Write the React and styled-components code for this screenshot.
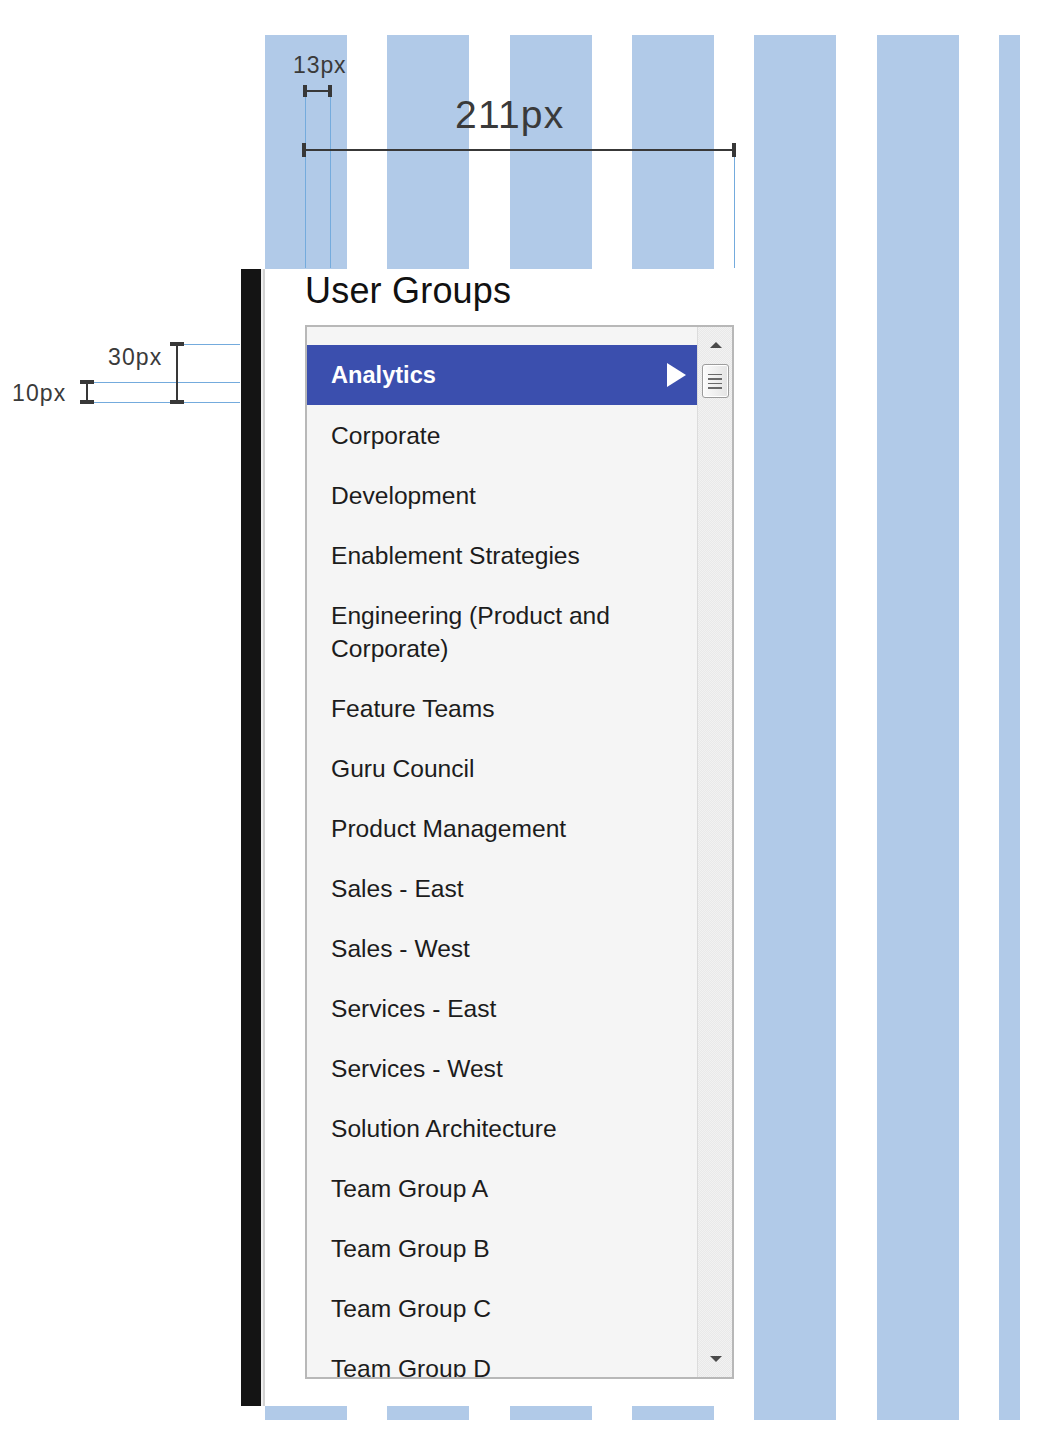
import React from 'react';
import styled, { createGlobalStyle } from 'styled-components';

const Global = createGlobalStyle`
  html, body { margin: 0; padding: 0; background: #ffffff; }
  body { font-family: "Liberation Sans", Arial, Helvetica, sans-serif; }
  * { box-sizing: border-box; }
`;

const Canvas = styled.div`
  position: relative;
  width: 1044px;
  height: 1446px;
  overflow: hidden;
  background: #ffffff;
`;

/* ---------- layout grid behind the panel ---------- */
const ColumnGrid = styled.div`
  position: absolute;
  left: 265px;
  top: 35px;
  width: 755px;
  height: 1385px;
  display: flex;
  gap: 40.33px;
  overflow: hidden;
`;

const GridColumn = styled.div`
  flex: 0 0 82px;
  height: 100%;
  background: #b1cae8;
`;

/* ---------- panel ---------- */
const Panel = styled.section`
  position: absolute;
  left: 241px;
  top: 269px;
  width: 500px;
  height: 1137px;
  display: flex;
`;

const PanelEdge = styled.div`
  flex: 0 0 20px;
  background: #141414;
`;

const PanelBody = styled.div`
  flex: 1;
  display: flex;
  flex-direction: column;
  background: #ffffff;
  border-left: 2px solid #efefef;
  box-shadow: inset 2px 0 0 #d2d2d2;
  padding: 4px 0 27px 42px;
`;

const Title = styled.h2`
  margin: 0 0 16px;
  font-family: "Liberation Sans", Arial, sans-serif;
  font-weight: 400;
  font-size: 36px;
  line-height: 36px;
  letter-spacing: 0.2px;
  color: #111111;
`;

const ListBox = styled.div`
  width: 429px;
  flex: 1;
  display: flex;
  border: 2px solid #b8b8b8;
  background: #f5f5f5;
  overflow: hidden;
`;

const Items = styled.ul`
  flex: 1;
  margin: 0;
  padding: 18px 0 0;
  list-style: none;
  overflow: hidden;
`;

const Item = styled.li`
  display: flex;
  align-items: center;
  justify-content: space-between;
  padding: 13.5px 11px 13.5px 24px;
  min-height: 60px;
  font-size: ${p => (p.$selected ? '23.6px' : '24.6px')};
  line-height: 33px;
  font-weight: ${p => (p.$selected ? 700 : 400)};
  color: ${p => (p.$selected ? '#ffffff' : '#1c1c1c')};
  background: ${p => (p.$selected ? '#3b4fae' : 'transparent')};
`;

const ItemLabel = styled.span`
  display: block;
  max-width: 330px;
`;

const PlayArrow = styled.span`
  flex: none;
  width: 0;
  height: 0;
  border-top: 12px solid transparent;
  border-bottom: 12px solid transparent;
  border-left: 19px solid #ffffff;
`;

const ScrollTrack = styled.div`
  flex: 0 0 35px;
  display: flex;
  flex-direction: column;
  align-items: center;
  border-left: 1px solid #dcdcdc;
  background-color: #eeeeee;
  background-image: repeating-conic-gradient(#f2f2f2 0 25%, #e9e9e9 0 50%);
  background-size: 2px 2px;
`;

const ArrowButton = styled.div`
  flex: 0 0 36px;
  width: 100%;
  display: flex;
  align-items: center;
  justify-content: center;
  padding-left: 2px;
  &::before {
    content: '';
    width: 0;
    height: 0;
    border-left: 6px solid transparent;
    border-right: 6px solid transparent;
    ${p => (p.$dir === 'up' ? 'border-bottom' : 'border-top')}: 6px solid #4a4a4a;
  }
`;

const Thumb = styled.div`
  flex: 0 0 34px;
  width: 27px;
  margin-top: 1px;
  border: 1px solid #9c9c9c;
  border-radius: 3px;
  background: linear-gradient(to right, #fbfbfb, #e4e4e4);
  display: flex;
  flex-direction: column;
  align-items: center;
  justify-content: center;
  gap: 3px;
  box-shadow: inset 0 0 0 1px #ffffff;
`;

const Grip = styled.span`
  width: 14px;
  height: 1.5px;
  background: #6a6a6a;
`;

const Spacer = styled.div`
  flex: 1;
`;

/* ---------- redline annotations ---------- */
const GuideV = styled.div`
  position: absolute;
  left: ${p => p.$x}px;
  top: ${p => p.$y}px;
  width: 1.5px;
  height: ${p => p.$len}px;
  background: #74abdd;
`;

const GuideH = styled.div`
  position: absolute;
  left: ${p => p.$x}px;
  top: ${p => p.$y}px;
  width: ${p => p.$len}px;
  height: 1.5px;
  background: #74abdd;
`;

const DimH = styled.div`
  position: absolute;
  left: ${p => p.$x}px;
  top: ${p => p.$y - 1}px;
  width: ${p => p.$len}px;
  height: 2px;
  background: #383838;
  &::before,
  &::after {
    content: '';
    position: absolute;
    top: ${p => 1 - p.$cap / 2}px;
    width: 4px;
    height: ${p => p.$cap}px;
    background: #383838;
  }
  &::before { left: 0; }
  &::after { right: 0; }
`;

const DimV = styled.div`
  position: absolute;
  left: ${p => p.$x - 1}px;
  top: ${p => p.$y}px;
  width: 2px;
  height: ${p => p.$len}px;
  background: #383838;
  &::before,
  &::after {
    content: '';
    position: absolute;
    left: ${p => 1 - p.$cap / 2}px;
    width: ${p => p.$cap}px;
    height: 4px;
    background: #383838;
  }
  &::before { top: 0; }
  &::after { bottom: 0; }
`;

const DimLabel = styled.span`
  position: absolute;
  left: ${p => p.$x}px;
  top: ${p => p.$y}px;
  font-family: "Liberation Sans", Arial, sans-serif;
  font-size: ${p => p.$size}px;
  line-height: 1;
  letter-spacing: ${p => p.$track}px;
  color: #3a3a3a;
  white-space: nowrap;
`;

const groups = [
  'Analytics',
  'Corporate',
  'Development',
  'Enablement Strategies',
  'Engineering (Product and Corporate)',
  'Feature Teams',
  'Guru Council',
  'Product Management',
  'Sales - East',
  'Sales - West',
  'Services - East',
  'Services - West',
  'Solution Architecture',
  'Team Group A',
  'Team Group B',
  'Team Group C',
  'Team Group D',
];

export default function App() {
  return (
    <Canvas>
      <Global />
      <ColumnGrid>
        {Array.from({ length: 7 }).map((_, i) => (
          <GridColumn key={i} />
        ))}
      </ColumnGrid>

      <Panel>
        <PanelEdge />
        <PanelBody>
          <Title>User Groups</Title>
          <ListBox>
            <Items>
              {groups.map((g, i) => (
                <Item key={g} $selected={i === 0}>
                  <ItemLabel>{g}</ItemLabel>
                  {i === 0 && <PlayArrow />}
                </Item>
              ))}
            </Items>
            <ScrollTrack>
              <ArrowButton $dir="up" />
              <Thumb>
                <Grip />
                <Grip />
                <Grip />
                <Grip />
              </Thumb>
              <Spacer />
              <ArrowButton $dir="down" />
            </ScrollTrack>
          </ListBox>
        </PanelBody>
      </Panel>

      {/* top measurements */}
      <GuideV $x={304.5} $y={92} $len={176} />
      <GuideV $x={329.5} $y={92} $len={176} />
      <GuideV $x={733.5} $y={152} $len={116} />
      <DimH $x={303} $y={91} $len={29} $cap={12} />
      <DimLabel $x={293} $y={54} $size={23} $track={0.9}>13px</DimLabel>
      <DimH $x={302} $y={150} $len={434} $cap={14} />
      <DimLabel $x={455} $y={95} $size={39} $track={1.2}>211px</DimLabel>

      {/* left measurements */}
      <GuideH $x={184} $y={343.5} $len={56} />
      <GuideH $x={94} $y={381.5} $len={146} />
      <GuideH $x={94} $y={401.5} $len={146} />
      <DimV $x={177} $y={342} $len={62} $cap={14} />
      <DimLabel $x={108} $y={346} $size={23} $track={1.1}>30px</DimLabel>
      <DimV $x={87} $y={380} $len={24} $cap={14} />
      <DimLabel $x={12} $y={382} $size={23} $track={1.1}>10px</DimLabel>
    </Canvas>
  );
}
